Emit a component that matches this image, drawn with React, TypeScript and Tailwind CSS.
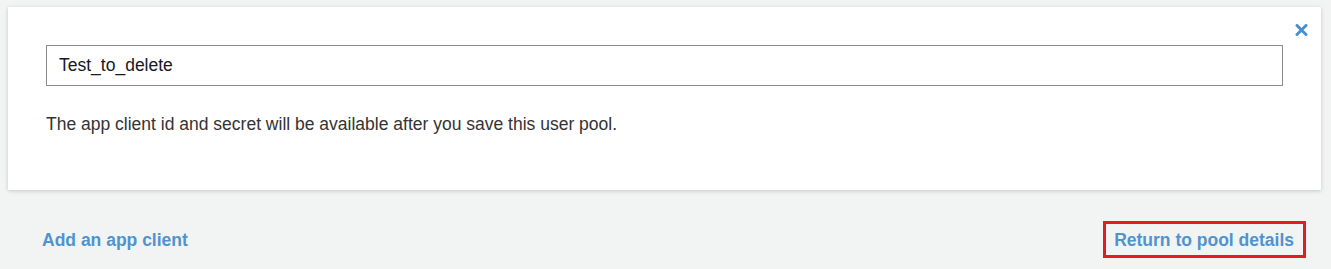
import React from 'react'

const CloseIcon = () => (
  <svg width="13" height="12" viewBox="0 0 13 12" aria-hidden="true">
    <path d="M2 1.5 L11 10.5 M11 1.5 L2 10.5" stroke="#4d8fcc" strokeWidth="3" strokeLinecap="round" />
  </svg>
)

const App = () => {
  return (
    <div className="w-[1331px] h-[269px] bg-[#f2f3f3] font-['Liberation_Sans',Arial,sans-serif] overflow-hidden">
      <div className="pt-[7px] pl-[8px] pr-[10px]">
        <div className="relative bg-white h-[183px] shadow-[0_1px_4px_rgba(0,0,0,0.18)] pt-[38px] pl-[38px] pr-[38px]">
          <button className="absolute right-[13px] top-[17px] p-0">
            <CloseIcon />
          </button>
          <input
            readOnly
            value="Test_to_delete"
            className="w-[1237px] h-[41px] border border-[#8c8c8c] px-[12px] text-[17.5px] text-[#16191f] outline-none bg-white"
          />
          <p className="mt-[27px] text-[17.5px] leading-[22px] text-[#333333]">
            The app client id and secret will be available after you save this user pool.
          </p>
        </div>
      </div>
      <div className="flex items-center justify-between pl-[42px] pr-[25px] mt-[31px]">
        <a href="#" className="text-[17.5px] font-bold text-[#4f93d0] leading-[22px]">
          Add an app client
        </a>
        <div className="border-[3px] border-[#e31b23] h-[37px] pl-[8px] pr-[9px] flex items-center">
          <a href="#" className="text-[17.5px] font-bold text-[#4f93d0] leading-[22px]">
            Return to pool details
          </a>
        </div>
      </div>
    </div>
  )
}

export default App
